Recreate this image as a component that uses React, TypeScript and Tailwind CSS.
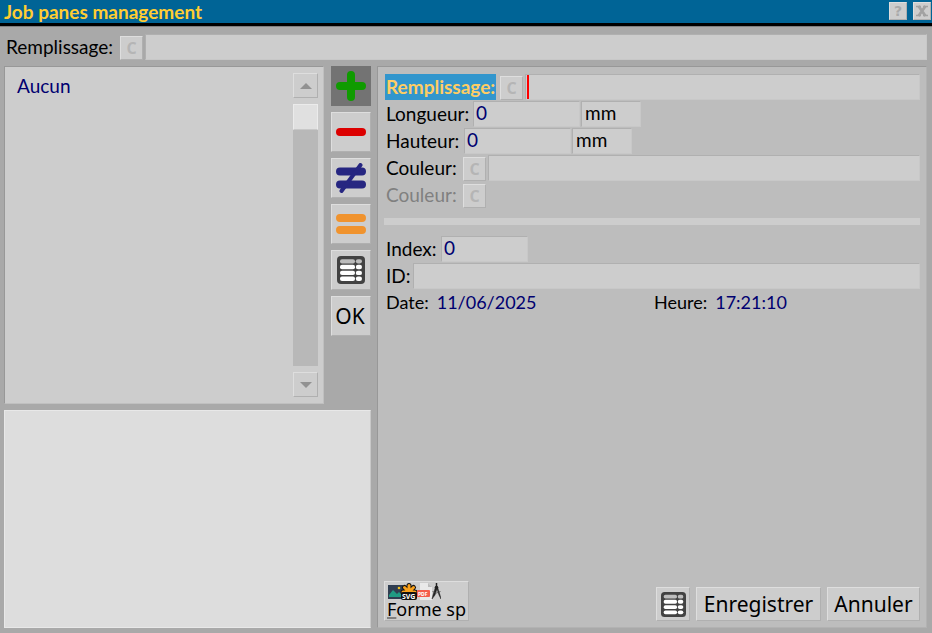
import React, { useState } from 'react';
import clsx from 'clsx';

const raised = 'border border-t-[#dedede] border-l-[#dedede] border-r-[#b0b0b0] border-b-[#b0b0b0] bg-[#cdcdcd]';
const sunken = 'border border-t-[#b0b0b0] border-l-[#b0b0b0] border-r-[#c8c8c8] border-b-[#c8c8c8] bg-[#cdcdcd]';

const TableIcon: React.FC<{ className: string }> = ({ className }) => (
  <svg viewBox="0 0 28 28" className={className}>
    <rect width="28" height="28" rx="4" fill="#424242" />
    <g fill="#bdbdbd">
      <rect x="3" y="3.2" width="15" height="4.2" rx="2" />
      <rect x="18.8" y="3.2" width="6.2" height="4.2" rx="2.1" />
    </g>
    {[8.8, 14.7, 20.6].map((y) => (
      <g key={y} fill="#fff">
        <rect x="3" y={y} width="15" height="4.4" rx="2" />
        <rect x="18.8" y={y} width="6.2" height="4.4" rx="2.2" />
      </g>
    ))}
  </svg>
);

const ClearButton: React.FC<{ label: string }> = ({ label }) => (
  <button
    disabled
    aria-label={label}
    className={clsx(raised, "mt-0.5 h-6 w-[23px] shrink-0 text-center font-['Open_Sans',sans-serif] text-base leading-5 font-bold text-[#b5b5b5]")}
  >
    C
  </button>
);

interface FieldProps {
  id: string;
  label?: string;
  className: string;
  value?: string;
}

const Field: React.FC<FieldProps> = ({ id, label, className, value = '' }) => (
  <input
    id={id}
    aria-label={label}
    defaultValue={value}
    className={clsx(sunken, 'h-[26px] min-w-0 pr-0.5 pb-0.5 outline-none', className)}
  />
);

const ToolButton: React.FC<{ title: string; active?: boolean; onClick: () => void; children: React.ReactNode }> = ({
  title,
  active,
  onClick,
  children,
}) => (
  <button
    title={title}
    onClick={onClick}
    className={clsx('flex h-10 w-10 items-center justify-center', active ? 'bg-[#737373]' : raised)}
  >
    {children}
  </button>
);

export default function App() {
  const [mode, setMode] = useState('add');

  return (
    <div className="flex min-h-screen flex-col bg-[#a9a9a9] font-[Lato,sans-serif] text-[19px] leading-[26px] text-black">
      <header className="flex h-[26px] shrink-0 items-start justify-between border-b-3 border-black bg-[#006496] pr-px pl-1">
        <h1 className="leading-6 font-bold text-[#ffcd32]">Job panes management</h1>
        <div className="flex gap-1.5 pt-0.5 font-['DejaVu_Sans',sans-serif] text-sm leading-4 font-bold text-[#a9a9a9]">
          <button aria-label="Aide" className={clsx(raised, 'h-[18px] w-[18px]')}>?</button>
          <button aria-label="Fermer" className={clsx(raised, 'flex h-[18px] w-[18px] items-center justify-center')}>
            <svg viewBox="0 0 12 12" className="h-3 w-3">
              <path d="M0 1.5h5M7 1.5h5M0 10.5h5M7 10.5h5" stroke="#a2a2a2" strokeWidth="1.6" />
              <path d="M2.5 1l7 10M9.5 1l-7 10" stroke="#a2a2a2" strokeWidth="2.8" />
            </svg>
          </button>
        </div>
      </header>

      <div className="flex flex-1 flex-col gap-1.5 border-t border-[#808080] px-1 pt-[7px] pb-[5px]">
        <div className="flex pr-px pl-0.5">
          <label htmlFor="pane" className="w-[114px] shrink-0">Remplissage:</label>
          <ClearButton label="Effacer le remplissage" />
          <Field id="pane" className="ml-0.5 flex-1" />
        </div>

        <div className="flex flex-1 gap-1.5">
          <div className="flex w-[367px] shrink-0 flex-col gap-1.5">
            <div className="flex justify-between">
              <div className="flex h-[338px] w-80 justify-between border border-[#c0c0c0] border-t-[#989898] border-l-[#989898] bg-[#cdcdcd] py-1.5 pr-[5px] pl-3">
                <ul className="text-[#000070]">
                  <li>Aucun</li>
                </ul>
                <div className="flex w-[25px] flex-col gap-1.5">
                  <button aria-label="Monter" className={clsx(raised, 'flex h-[25px] items-center justify-center')}>
                    <svg viewBox="0 0 12 6" className="h-1.5 w-3"><path d="M0 6L6 0l6 6z" fill="#929292" /></svg>
                  </button>
                  <div className="flex-1 bg-[#b8b8b8]">
                    <div className="h-[26px] border border-[#ebebeb] border-b-[#c8c8c8] bg-[#e0e0e0]" />
                  </div>
                  <button aria-label="Descendre" className={clsx(raised, 'flex h-[25px] items-center justify-center')}>
                    <svg viewBox="0 0 12 6" className="h-1.5 w-3"><path d="M0 0l6 6 6-6z" fill="#929292" /></svg>
                  </button>
                </div>
              </div>

              <div className="flex flex-col gap-1.5">
                <ToolButton title="Ajouter" active={mode === 'add'} onClick={() => setMode('add')}>
                  <svg viewBox="0 0 30 30" className="h-[30px] w-[30px]">
                    <path d="M4 15h22M15 4v22" stroke="#0f9b00" strokeWidth="8" strokeLinecap="round" />
                  </svg>
                </ToolButton>
                <ToolButton title="Supprimer" active={mode === 'remove'} onClick={() => setMode('remove')}>
                  <svg viewBox="0 0 30 30" className="h-[30px] w-[30px]">
                    <path d="M4 15h22" stroke="#dc0000" strokeWidth="8" strokeLinecap="round" />
                  </svg>
                </ToolButton>
                <ToolButton title="Modifier" active={mode === 'edit'} onClick={() => setMode('edit')}>
                  <svg viewBox="0 0 30 30" className="h-[30px] w-[30px]" fill="none" stroke="#262681" strokeLinecap="round">
                    <path d="M4 8.5h22M4 21.5h22" strokeWidth="8" />
                    <path d="M24.5 2l-19 26" strokeWidth="4" />
                  </svg>
                </ToolButton>
                <ToolButton title="Dupliquer" active={mode === 'copy'} onClick={() => setMode('copy')}>
                  <svg viewBox="0 0 30 30" className="h-[30px] w-[30px]">
                    <path d="M4 9h22M4 21h22" stroke="#f0932e" strokeWidth="8" strokeLinecap="round" />
                  </svg>
                </ToolButton>
                <ToolButton title="Tableau" active={mode === 'table'} onClick={() => setMode('table')}>
                  <TableIcon className="h-7 w-7" />
                </ToolButton>
                <ToolButton title="Valider" onClick={() => setMode('add')}>
                  <span className="pr-0.5 font-['Noto_Sans',sans-serif] text-[21px]">OK</span>
                </ToolButton>
              </div>
            </div>
            {/* Preview area */}
            <div className="flex-1 border border-[#e8e8e8] border-r-[#c8c8c8] bg-[#dddddd]" />
          </div>

          <form
            onSubmit={(e) => e.preventDefault()}
            className="mr-px flex min-w-0 flex-1 flex-col border border-[#b2b2b2] border-t-[#989898] border-l-[#989898] bg-[#bdbdbd] p-1.5"
          >
            <div className="flex flex-col gap-px pt-px">
              <div className="flex">
                <label htmlFor="fill" className="mr-1 ml-px w-[111px] shrink-0 bg-[#3296cd] pl-px font-bold text-[#ffcd64]">
                  Remplissage:
                </label>
                <ClearButton label="Effacer" />
                <div className={clsx(sunken, 'ml-0.5 flex h-[26px] min-w-0 flex-1 pl-px')}>
                  <span className="w-0.5 shrink-0 bg-[#ff0000]" />
                  <input id="fill" className="min-w-0 flex-1 bg-transparent outline-none" />
                </div>
              </div>
              <div className="flex">
                <label htmlFor="length" className="w-[89px] shrink-0 pl-0.5">Longueur:</label>
                <Field id="length" value="0" className="w-[107px] pl-0.5 text-[#000070]" />
                <Field id="length-unit" label="Unité de longueur" value="mm" className="ml-px w-[60px] pl-[3px]" />
              </div>
              <div className="flex">
                <label htmlFor="height" className="w-20 shrink-0 pl-0.5">Hauteur:</label>
                <Field id="height" value="0" className="w-[107px] pl-0.5 text-[#000070]" />
                <Field id="height-unit" label="Unité de hauteur" value="mm" className="ml-px w-[60px] pl-[3px]" />
              </div>
              <div className="flex">
                <label htmlFor="color" className="w-[79px] shrink-0 pl-0.5">Couleur:</label>
                <ClearButton label="Effacer la couleur" />
                <Field id="color" className="ml-0.5 flex-1 pl-0.5 text-[#000070]" />
              </div>
              <div className="flex">
                <span className="w-[79px] shrink-0 pl-0.5 text-[#808080]">Couleur:</span>
                <ClearButton label="Effacer la seconde couleur" />
              </div>
            </div>

            <hr className="my-2.5 h-[7px] border-0 bg-[#cdcdcd]" />

            <div className="flex flex-col gap-px pt-px">
              <div className="flex">
                <label htmlFor="index" className="w-[57px] shrink-0 pl-0.5">Index:</label>
                <Field id="index" value="0" className="w-[87px] pl-0.5 text-[#000070]" />
              </div>
              <div className="flex">
                <label htmlFor="ident" className="w-[29px] shrink-0 pl-0.5">ID:</label>
                <Field id="ident" className="flex-1 pl-0.5 text-[#000070]" />
              </div>
              <div className="flex text-lg leading-6">
                <p className="flex w-1/2 gap-2 pl-0.5">
                  <span>Date:</span>
                  <span className="text-[#000070]">11/06/2025</span>
                </p>
                <p className="flex gap-2 pl-0.5">
                  <span>Heure:</span>
                  <span className="text-[#000070]">17:21:10</span>
                </p>
              </div>
            </div>

            <div className="mt-auto flex items-end gap-1.5 font-['Noto_Sans',sans-serif] text-[21px]">
              <button className={clsx(raised, 'mr-auto flex h-10 w-[85px] flex-col items-start pt-px pl-0.5 text-lg leading-[18px] whitespace-nowrap')}>
                <svg viewBox="0 0 54 17" className="h-[17px] w-[54px] shrink-0">
                  <rect x="1" y="2" width="15" height="14" fill="#303e51" />
                  <path d="M2 14v-2l4-5 4 4 2-2 3 3v2z" fill="#209b83" />
                  <circle cx="12" cy="5" r="1.3" fill="#f0c020" />
                  <g stroke="#111" strokeWidth="5" strokeLinecap="round">
                    <path d="M22 9V2.5M22 9l-4.500-4.500M22 9l4.500-4.500M22 9h-6M22 9h6" />
                  </g>
                  <g stroke="#f9a11b" strokeWidth="3" strokeLinecap="round">
                    <path d="M22 9V2.5M22 9l-4.500-4.500M22 9l4.500-4.500M22 9h-6M22 9h6" />
                  </g>
                  <rect x="14" y="9" width="16" height="8" rx="2" fill="#111" />
                  <text x="15" y="15.5" fontSize="7" fontWeight="700" fill="#fff">SVG</text>
                  <path d="M33 0h8l4 4v13H33z" fill="#e9e9e9" />
                  <path d="M41 0v4h4z" fill="#bcbcbc" />
                  <rect x="30" y="7" width="13" height="7" rx="1" fill="#f45b4b" />
                  <text x="31" y="12.5" fontSize="5" fontWeight="700" fill="#fff">PDF</text>
                  <path d="M49.5 0v4" stroke="#222" strokeWidth="1.5" />
                  <path d="M48.5 4l-2.5 8-1 4 3-4 2-6 2 6 2 4-1-4-2.500-8z" fill="#222" stroke="#222" strokeWidth="0.5" />
                  <path d="M45.5 8.500q4 3 8 0" fill="none" stroke="#444" strokeWidth="0.7" />
                  <circle cx="49.5" cy="4.500" r="1.8" fill="#222" />
                </svg>
                <span><span className="underline decoration-[#808080] decoration-2">F</span>orme sp</span>
              </button>
              <button aria-label="Tableau" className={clsx(raised, 'flex h-[34px] w-[34px] items-center justify-center')}>
                <TableIcon className="h-[25px] w-[25px]" />
              </button>
              <button className={clsx(raised, 'h-[34px] w-[125px] leading-8')}>Enregistrer</button>
              <button className={clsx(raised, 'h-[34px] w-[93px] leading-8')}>Annuler</button>
            </div>
          </form>
        </div>
      </div>
    </div>
  );
}
